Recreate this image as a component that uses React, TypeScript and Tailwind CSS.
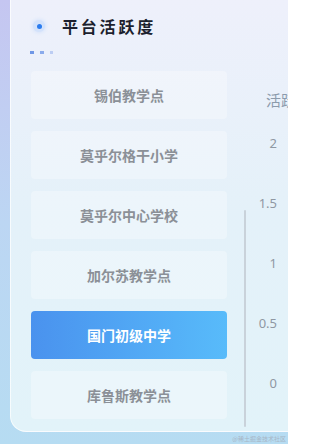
import React from "react";

const items = ["锡伯教学点", "莫乎尔格干小学", "莫乎尔中心学校", "加尔苏教学点", "国门初级中学", "库鲁斯教学点"];
const ticks = ["2", "1.5", "1", "0.5", "0"];

export default function App() {
  return (
    <div className="relative w-[288px] h-[444px] overflow-hidden bg-gradient-to-b from-[#c5c6f1] via-[#bcd6f3] to-[#b6dcf2] font-['Noto_Sans_CJK_SC','Noto_Sans',sans-serif]">
      <div className="ml-[10px] h-[432px] rounded-bl-[16px] border-l border-b border-white/70 bg-gradient-to-b from-[#eef0fb] via-[#e4f1f9] to-[#e2f3f9] flex flex-col">
        <div className="flex items-center h-[50px] pl-[22px] pt-[2px]">
          <div className="w-[12px] h-[12px] rounded-full bg-[#d3e2fb] flex items-center justify-center shadow-[0_0_4px_#c9dcfa]">
            <div className="w-[5px] h-[5px] rounded-full bg-[#2b7cef]" />
          </div>
          <div className="ml-[17px] text-[16px] font-bold tracking-[2.8px] text-[#1c1f2e] leading-none">平台活跃度</div>
        </div>
        <div className="flex items-center gap-[6px] pl-[19px] h-[4px]">
          <div className="w-[4px] h-[3px] bg-[#6f97e6]" />
          <div className="w-[4px] h-[3px] bg-[#8aabec]" />
          <div className="w-[3px] h-[3px] bg-[#bccdf3]" />
        </div>
        <div className="flex mt-[17px]">
          <div className="ml-[20px] w-[196px] flex flex-col gap-[12px]">
            {items.map((t, i) =>
              i === 4 ? (
                <div key={t} className="h-[48px] rounded-[4px] bg-gradient-to-r from-[#4a92ee] to-[#58bbfa] flex items-center justify-center text-white text-[14px] font-bold">
                  {t}
                </div>
              ) : (
                <div key={t} className="h-[48px] rounded-[4px] bg-white/30 flex items-center justify-center text-[#8b9097] text-[14px] font-bold">
                  {t}
                </div>
              )
            )}
          </div>
          <div className="ml-[17px] pt-[139px]">
            <div className="w-[2px] h-[217px] rounded-full bg-[#c9d2da]" />
          </div>
          <div className="flex-1 overflow-hidden pr-[11px] flex flex-col">
            <div className="mt-[19px] pl-[20px] whitespace-nowrap text-[15px] leading-[20px] text-[#8c9bac]">活跃度</div>
            <div className="mt-[23px] flex flex-col gap-[40px]">
              {ticks.map((t) => (
                <div key={t} className="text-right text-[13px] leading-[20px] text-[#8f98a3] font-['Noto_Sans',sans-serif]">
                  {t}
                </div>
              ))}
            </div>
          </div>
        </div>
      </div>
      <div className="absolute right-[2px] bottom-[2px] text-[6px] leading-none text-[#a7b6c6] whitespace-nowrap">@稀土掘金技术社区</div>
    </div>
  );
}
